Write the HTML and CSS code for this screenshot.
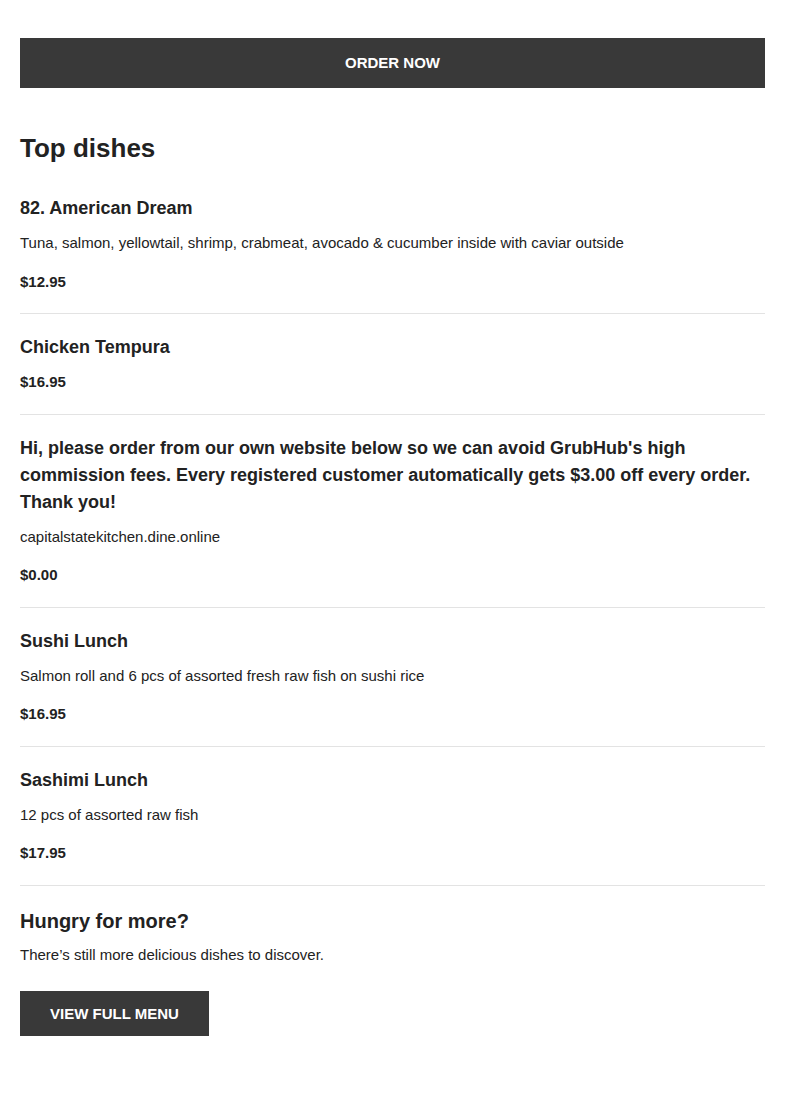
FILE: index.html
```html
<!DOCTYPE html>
<html>
<head>
<meta charset="utf-8">
<link rel="stylesheet" href="styles.css">
</head>
<body>
<div class="page">
  <a class="order-btn">ORDER NOW</a>
  <h2 class="section-title">Top dishes</h2>
  <div class="dish">
    <h3 class="dish-name">82. American Dream</h3>
    <p class="dish-desc">Tuna, salmon, yellowtail, shrimp, crabmeat, avocado &amp; cucumber inside with caviar outside</p>
    <p class="dish-price">$12.95</p>
  </div>
  <div class="dish">
    <h3 class="dish-name">Chicken Tempura</h3>
    <p class="dish-price">$16.95</p>
  </div>
  <div class="dish">
    <h3 class="dish-name">Hi, please order from our own website below so we can avoid GrubHub's high commission fees. Every registered customer automatically gets $3.00 off every order. Thank you!</h3>
    <p class="dish-desc">capitalstatekitchen.dine.online</p>
    <p class="dish-price">$0.00</p>
  </div>
  <div class="dish">
    <h3 class="dish-name">Sushi Lunch</h3>
    <p class="dish-desc">Salmon roll and 6 pcs of assorted fresh raw fish on sushi rice</p>
    <p class="dish-price">$16.95</p>
  </div>
  <div class="dish">
    <h3 class="dish-name">Sashimi Lunch</h3>
    <p class="dish-desc">12 pcs of assorted raw fish</p>
    <p class="dish-price">$17.95</p>
  </div>
  <div class="more">
    <h3 class="more-title">Hungry for more?</h3>
    <p class="more-text">There’s still more delicious dishes to discover.</p>
    <a class="menu-btn">VIEW FULL MENU</a>
  </div>
</div>
</body>
</html>
```
FILE: styles.css
```css
* { box-sizing: border-box; }
html, body { margin: 0; padding: 0; background: #fff; }
body {
  font-family: "Liberation Sans", Arial, sans-serif;
  color: #222;
}
.page {
  padding: 38px 20px 40px;
}
.order-btn {
  display: block;
  height: 50px;
  line-height: 50px;
  background: #393939;
  color: #fff;
  text-align: center;
  font-size: 15px;
  font-weight: bold;
}
.section-title {
  margin: 39px 0 6px;
  font-size: 26px;
  line-height: 42px;
  font-weight: bold;
}
.dish {
  padding: 20px 0;
  border-bottom: 1px solid #e3e3e3;
}
.dish-name {
  margin: 0;
  font-size: 18px;
  line-height: 27px;
  font-weight: bold;
}
.dish-desc {
  margin: 10px 0 0;
  font-size: 15px;
  line-height: 22.5px;
}
.dish-price {
  margin: 16px 0 0;
  font-size: 15px;
  line-height: 22.5px;
  font-weight: bold;
}
.dish-name + .dish-price { margin-top: 10px; }
.more { padding-top: 20px; }
.more-title {
  margin: 0;
  font-size: 20px;
  line-height: 30px;
  font-weight: bold;
}
.more-text {
  margin: 8px 0 0;
  font-size: 15px;
  line-height: 22.5px;
}
.menu-btn {
  display: inline-block;
  margin-top: 25px;
  height: 45px;
  line-height: 45px;
  padding: 0 30px;
  background: #393939;
  color: #fff;
  font-size: 15px;
  font-weight: bold;
}
```
